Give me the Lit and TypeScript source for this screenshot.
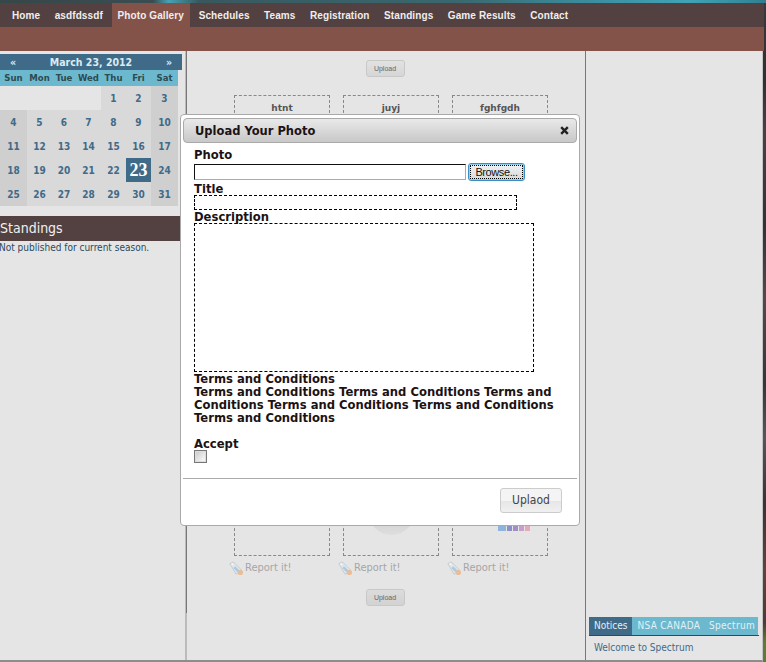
import { LitElement, html, css, svg } from "lit";
import { customElement } from "lit/decorators.js";

const NAV = ["Home", "asdfdssdf", "Photo Gallery", "Schedules", "Teams", "Registration", "Standings", "Game Results", "Contact"];
const DAYS = ["Sun", "Mon", "Tue", "Wed", "Thu", "Fri", "Sat"];
const TERMS = "Terms and Conditions";
const TERMS_LONG = Array(6).fill(TERMS).join(" ");

const tagIcon = svg`
  <path d="M1 3 L5 1 L14 10 L12 13 L8 15 Z" fill="#dfe6ec" stroke="#c4c8cc" stroke-width="1"/>
  <path d="M6 7 L11 12" stroke="#a9cbe6" stroke-width="3"/>
  <circle cx="3.6" cy="3.6" r="0.9" fill="#fff"/>
  <circle cx="13" cy="13" r="3" fill="#e9bd98"/>`;

@customElement("app-root")
export class AppRoot extends LitElement {
  static styles = css`
    :host {
      display: block;
      position: relative;
      width: 766px;
      height: 662px;
      overflow: hidden;
      font-family: "DejaVu Sans", Verdana, sans-serif;
      background: linear-gradient(180deg, #3b3a3e 0, #2e3034 12%, #4a4044 20%, #2f3238 34%, #56484a 45%, #33363a 58%, #55565c 66%, #3a3234 76%, #61423e 86%, #4b3a36 94%, #5f7c34 97%, #5f7c34 100%);
    }
    .strip {
      height: 3px;
      background: linear-gradient(90deg, #36474a 0, #3a4d50 20%, #45a3b5 22%, #38585e 26%, #3a6870 60%, #3a8a9a 75%, #40a4b6 90%, #2f8090 100%);
    }
    .nav {
      display: flex;
      width: 764px;
      height: 24px;
      padding-left: 4.75px;
      box-sizing: border-box;
      background: #534141;
    }
    .nav a {
      padding: 0 7.25px;
      font: bold 10px/25px "Liberation Sans", Arial, sans-serif;
      letter-spacing: 0.1px;
      color: #f0eeee;
      white-space: nowrap;
    }
    .nav a.active {
      background: #835249;
      margin: 0 1.5px;
      padding: 0 6px;
    }
    .subnav {
      width: 764px;
      height: 24px;
      background: #835249;
    }
    .main {
      display: flex;
      width: 763px;
      height: 611px;
      box-sizing: border-box;
      background: #e5e5e5;
      border-right: 1px solid #c4c4c4;
      border-bottom: 2px solid #8c8c8c;
    }
    .sidebar {
      width: 185px;
      flex: none;
      padding-top: 3px;
      box-sizing: border-box;
      font-family: "DejaVu Sans Condensed", "Noto Sans", sans-serif;
    }
    .cal-head {
      display: flex;
      justify-content: space-between;
      align-items: center;
      width: 182px;
      height: 16px;
      padding: 0 10px;
      box-sizing: border-box;
      background: #3f6b89;
      color: #dcebf2;
      font-size: 10.5px;
      font-weight: bold;
    }
    .cal-grid,
    .dows {
      display: grid;
      grid-template-columns: 27px 25px 24px 25px 25px 25px 27px;
      width: 178px;
    }
    .cal-grid {
      grid-auto-rows: 24px;
    }
    .dow {
      height: 16px;
      background: #6cb9cf;
      color: #2f4a50;
      font-size: 9.5px;
      font-weight: bold;
      line-height: 15px;
      text-align: center;
    }
    .cell {
      display: flex;
      align-items: center;
      justify-content: center;
      background: #d9d9d9;
      color: #3f6b89;
      font-size: 10px;
      font-weight: bold;
    }
    .cell.weekend {
      background: #cfcfcf;
    }
    .cell.empty {
      background: #e5e5e5;
    }
    .cell.today {
      background: #3f6b89;
      color: #fff;
      font: bold 18px "Liberation Serif", serif;
    }
    .panel-title {
      height: 25px;
      margin-top: 10px;
      background: #534141;
      color: #f0f0f0;
      font-size: 14px;
      line-height: 25px;
    }
    .panel-text {
      margin: 0 0 0 -1px;
      color: #2b4a5c;
      font-size: 10px;
      line-height: 13px;
      white-space: nowrap;
    }
    .rule {
      width: 2px;
      flex: none;
      background: #bbb;
    }
    .rule::after {
      content: "";
      display: block;
      width: 1px;
      height: 562px;
      margin-left: 1px;
      background: #777;
    }
    .gallery {
      width: 399px;
      flex: none;
      display: flex;
      flex-direction: column;
      align-items: center;
      padding-top: 9px;
      box-sizing: border-box;
      border-right: 1px solid #777;
    }
    .small-btn {
      width: 39px;
      height: 17px;
      margin-right: 2px;
      box-sizing: border-box;
      border: 1px solid #c8c8c8;
      border-radius: 3px;
      background: linear-gradient(180deg, #e2e2e2, #d6d6d6);
      color: #666;
      font: 7px/15px "Liberation Sans", sans-serif;
      text-align: center;
    }
    .cards {
      display: flex;
      gap: 13px;
      margin-top: 18px;
      margin-left: 10px;
    }
    .card-col {
      width: 96px;
    }
    .card {
      height: 461px;
      box-sizing: border-box;
      border: 1px dashed #888;
      padding-top: 7px;
      position: relative;
      text-align: center;
      color: #555;
      font-size: 9px;
      font-weight: bold;
    }
    .thumb {
      display: block;
      margin: 3px auto 0;
      width: 56px;
      height: 2px;
    }
    .thumb.dark {
      background: #555;
    }
    .thumb.light {
      background: #d4d4d4;
    }
    .circle {
      position: absolute;
      left: 24px;
      bottom: 20px;
      width: 47px;
      height: 30px;
      border-radius: 0 0 24px 24px;
      background: linear-gradient(180deg, #c8c8c8, #dedede);
    }
    .swatch {
      position: absolute;
      left: 45px;
      bottom: 24px;
      display: flex;
      gap: 1px;
      height: 6px;
    }
    .swatch i {
      display: block;
      height: 6px;
      width: 5px;
    }
    .report {
      display: flex;
      align-items: center;
      gap: 2px;
      margin: 4px 0 0 -5px;
      color: #a6a6a6;
      font: 11px/16px "DejaVu Sans Condensed", "Noto Sans", sans-serif;
    }
    .report svg {
      width: 14px;
      height: 14px;
      flex: none;
    }
    .gallery .small-btn.bottom {
      margin-top: 13px;
      background: linear-gradient(180deg, #dcdcdc, #d2d2d2);
    }
    .right {
      flex: 1;
      display: flex;
      flex-direction: column;
      justify-content: flex-end;
      padding: 0 0 5px 3px;
      box-sizing: border-box;
    }
    .tabs {
      display: flex;
      width: 170px;
      height: 19px;
      box-sizing: border-box;
      background: linear-gradient(90deg, #6cb9cf 169px, transparent 169px);
      border-bottom: 1px solid #444;
      color: #e2f1f5;
      font: 10px/18px "DejaVu Sans Condensed", "Noto Sans", sans-serif;
    }
    .tabs span {
      padding: 0 5px;
      white-space: nowrap;
      letter-spacing: 0.3px;
    }
    .tabs span.active {
      background: #3f6b89;
      letter-spacing: 0;
    }
    .tabs span.last {
      margin-left: auto;
      padding: 0 4px 0 0;
    }
    .welcome {
      margin: 5px 0 0 5px;
      color: #3f6b89;
      font: 10px/14px "DejaVu Sans Condensed", "Noto Sans", sans-serif;
      white-space: nowrap;
    }
    .modal {
      position: absolute;
      left: 180px;
      top: 114px;
      width: 400px;
      height: 412px;
      box-sizing: border-box;
      padding: 3px 2px 0;
      background: #fff;
      border: 1px solid #aaa;
      border-radius: 4px;
      color: #1c1214;
      font-size: 11.6px;
      font-weight: bold;
    }
    .modal-head {
      display: flex;
      align-items: center;
      justify-content: space-between;
      height: 25px;
      padding: 0 7px 0 11px;
      box-sizing: border-box;
      border: 1px solid #aaa;
      border-radius: 4px;
      background: linear-gradient(180deg, #e9e9e9, #c8c8c8);
      font-size: 11.5px;
    }
    .close {
      width: 9px;
      height: 9px;
      display: block;
    }
    .modal-body {
      padding: 6px 0 0 11px;
      line-height: 13px;
    }
    .label {
      display: block;
      height: 12px;
    }
    .file-row {
      display: flex;
      align-items: center;
      height: 18px;
      margin: 2px 0 2px;
    }
    .file-box {
      width: 272px;
      height: 16px;
      box-sizing: border-box;
      border: 1px solid;
      border-color: #111 #aaa #aaa #111;
    }
    .browse {
      width: 57px;
      height: 18px;
      margin-left: 2px;
      padding: 1px;
      box-sizing: border-box;
      border: 1px solid #3a8fc8;
      border-radius: 3px;
      background: linear-gradient(180deg, #f2f2f2, #d8d8d8);
      box-shadow: inset 0 0 0 1px #8fd0f0;
    }
    .browse span {
      display: block;
      border: 1px dotted #000;
      color: #111;
      font: 11px/12px "Liberation Sans", Arial, sans-serif;
      letter-spacing: -0.4px;
      text-align: center;
    }
    .field {
      display: block;
      box-sizing: border-box;
      border: 1px dashed #000;
    }
    .field.title {
      width: 323px;
      height: 15px;
      margin-bottom: 1px;
    }
    .field.desc {
      width: 340px;
      height: 149px;
    }
    .terms {
      margin-top: 1px;
      width: 370px;
    }
    .accept {
      margin-top: 13px;
    }
    .check {
      display: block;
      width: 13px;
      height: 13px;
      box-sizing: border-box;
      margin-top: -1px;
      border: 1px solid #777;
      background: linear-gradient(135deg, #c8c8c8, #fff);
      box-shadow: inset 0 0 0 1px #ddd;
    }
    .divider {
      margin-top: 15px;
      height: 1px;
      background: #aaa;
    }
    .modal-foot {
      display: flex;
      justify-content: flex-end;
      padding: 9px 15px 0 0;
    }
    .upload {
      width: 62px;
      height: 25px;
      box-sizing: border-box;
      border: 1px solid #ccc;
      border-radius: 3px;
      background: linear-gradient(180deg, #f4f4f4 50%, #e6e6e6 50%, #f0f0f0);
      color: #444;
      font: 12px/23px "DejaVu Sans Condensed", "Noto Sans", sans-serif;
      text-align: center;
    }
  `;

  private renderCalendar() {
    const cells = [];
    for (let i = 0; i < 4; i++) cells.push(html`<div class="cell empty"></div>`);
    for (let d = 1; d <= 31; d++) {
      const col = (d + 3) % 7;
      const weekend = col === 0 || col === 6;
      const today = d === 23;
      cells.push(html`<div class="cell ${weekend ? "weekend" : ""} ${today ? "today" : ""}">${d}</div>`);
    }
    return html`
      <div class="cal-head"><span>«</span><span>March 23, 2012</span><span>»</span></div>
      <div class="dows">${DAYS.map((d) => html`<div class="dow">${d}</div>`)}</div>
      <div class="cal-grid">${cells}</div>
    `;
  }

  private renderCard(title: string, kind: number) {
    return html`
      <div class="card-col">
        <div class="card">
          ${title}
          <span class="thumb ${kind === 0 ? "dark" : kind === 2 ? "light" : ""}"></span>
          ${kind === 1 ? html`<div class="circle"></div>` : null}
          ${kind === 2
            ? html`<div class="swatch">
                <i style="background:#8fb4dc;width:8px"></i><i style="background:#8f8fc8"></i><i style="background:#a08fc8"></i><i style="background:#c89fc8"></i><i style="background:#e8a8b8"></i>
              </div>`
            : null}
        </div>
        <div class="report"><svg viewBox="0 0 16 16">${tagIcon}</svg>Report it!</div>
      </div>
    `;
  }

  render() {
    return html`
      <div class="strip"></div>
      <div class="nav">
        ${NAV.map((n) => html`<a class=${n === "Photo Gallery" ? "active" : ""}>${n}</a>`)}
      </div>
      <div class="subnav"></div>
      <div class="main">
        <div class="sidebar">
          ${this.renderCalendar()}
          <div class="panel-title">Standings</div>
          <p class="panel-text">Not published for current season.</p>
        </div>
        <div class="rule"></div>
        <div class="gallery">
          <div class="small-btn">Upload</div>
          <div class="cards">
            ${this.renderCard("htnt", 0)} ${this.renderCard("juyj", 1)} ${this.renderCard("fghfgdh", 2)}
          </div>
          <div class="small-btn bottom">Upload</div>
        </div>
        <div class="right">
          <div class="tabs">
            <span class="active">Notices</span><span>NSA CANADA</span><span class="last">Spectrum</span>
          </div>
          <div class="welcome">Welcome to Spectrum</div>
        </div>
      </div>

      <div class="modal">
        <div class="modal-head">
          <span>Upload Your Photo</span>
          <svg class="close" viewBox="0 0 9 9"><path d="M1.2 1.2 L7.8 7.8 M7.8 1.2 L1.2 7.8" stroke="#222" stroke-width="2.4"/></svg>
        </div>
        <div class="modal-body">
          <span class="label">Photo</span>
          <div class="file-row">
            <div class="file-box"></div>
            <div class="browse"><span>Browse...</span></div>
          </div>
          <span class="label">Title</span>
          <div class="field title"></div>
          <span class="label">Description</span>
          <div class="field desc"></div>
          <div class="terms">
            <div>${TERMS}</div>
            <div>${TERMS_LONG}</div>
          </div>
          <div class="accept">Accept</div>
          <div class="check"></div>
        </div>
        <div class="divider"></div>
        <div class="modal-foot"><div class="upload">Uplaod</div></div>
      </div>
    `;
  }
}
